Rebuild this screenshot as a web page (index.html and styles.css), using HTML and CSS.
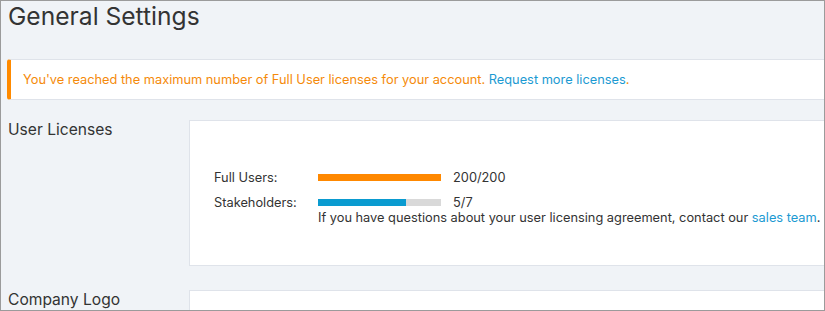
FILE: index.html
```html
<!DOCTYPE html>
<html>
<head>
<meta charset="utf-8">
<link rel="stylesheet" href="styles.css">
</head>
<body>
<div class="frame">
  <h1 class="title">General Settings</h1>
  <div class="alert">You've reached the maximum number of Full User licenses for your account. <a class="link" href="#">Request more licenses</a>.</div>
  <div class="section">
    <div class="label">User Licenses</div>
    <div class="card card-licenses">
      <div class="row">
        <div class="row-label">Full Users:</div>
        <div class="bar"><div class="fill fill-orange" style="width:100%"></div></div>
        <div class="value">200/200</div>
      </div>
      <div class="row">
        <div class="row-label">Stakeholders:</div>
        <div class="bar"><div class="fill fill-blue" style="width:71.4%"></div></div>
        <div class="value">5/7</div>
      </div>
      <div class="note">If you have questions about your user licensing agreement, contact our <a class="link" href="#">sales team</a>.</div>
    </div>
  </div>
  <div class="section section-logo">
    <div class="label">Company Logo</div>
    <div class="card card-logo"></div>
  </div>
</div>
</body>
</html>
```
FILE: styles.css
```css
html, body {
  margin: 0;
  padding: 0;
  background: #ffffff;
}
.frame {
  width: 825px;
  height: 311px;
  box-sizing: border-box;
  border: 1px solid #9b9b9b;
  background: #f0f3f7;
  overflow: hidden;
  font-family: Inter, "Open Sans", sans-serif;
  color: #333333;
}
.title {
  margin: 0;
  padding: 0 0 0 7px;
  font-size: 24.6px;
  font-weight: 400;
  line-height: 30px;
  color: #333333;
}
.alert {
  margin: 28px -40px 0 6px;
  height: 41px;
  box-sizing: border-box;
  background: #ffffff;
  border: 1px solid #dfe3ea;
  border-left: 4px solid #ff8a00;
  border-radius: 3px;
  padding: 0 0 0 12px;
  font-size: 12.8px;
  line-height: 39px;
  white-space: nowrap;
  color: #f58a0a;
}
.link {
  color: #1c9ad2;
  text-decoration: none;
}
.section {
  display: flex;
  margin-top: 20px;
}
.section-logo {
  margin-top: 24px;
}
.label {
  width: 188px;
  padding-left: 7px;
  box-sizing: border-box;
  flex: none;
  font-size: 15.6px;
  line-height: 18px;
  padding-top: 1px;
  color: #333333;
}
.card {
  flex: none;
  width: 700px;
  box-sizing: border-box;
  background: #ffffff;
  border: 1px solid #dfe3ea;
}
.card-licenses {
  height: 146px;
  padding: 47px 0 0 24px;
}
.card-logo {
  height: 40px;
}
.row {
  display: flex;
  align-items: center;
  height: 18px;
  margin-bottom: 7px;
  font-size: 12.8px;
}
.row-label {
  width: 104px;
  flex: none;
}
.bar {
  width: 123px;
  height: 7px;
  background: #d9d9d9;
  flex: none;
}
.fill {
  height: 100%;
}
.fill-orange {
  background: #ff8800;
}
.fill-blue {
  background: #0a9bd0;
}
.value {
  margin-left: 12px;
}
.note {
  margin: -9px 0 0 104px;
  font-size: 12.8px;
  line-height: 18px;
  white-space: nowrap;
}
```
